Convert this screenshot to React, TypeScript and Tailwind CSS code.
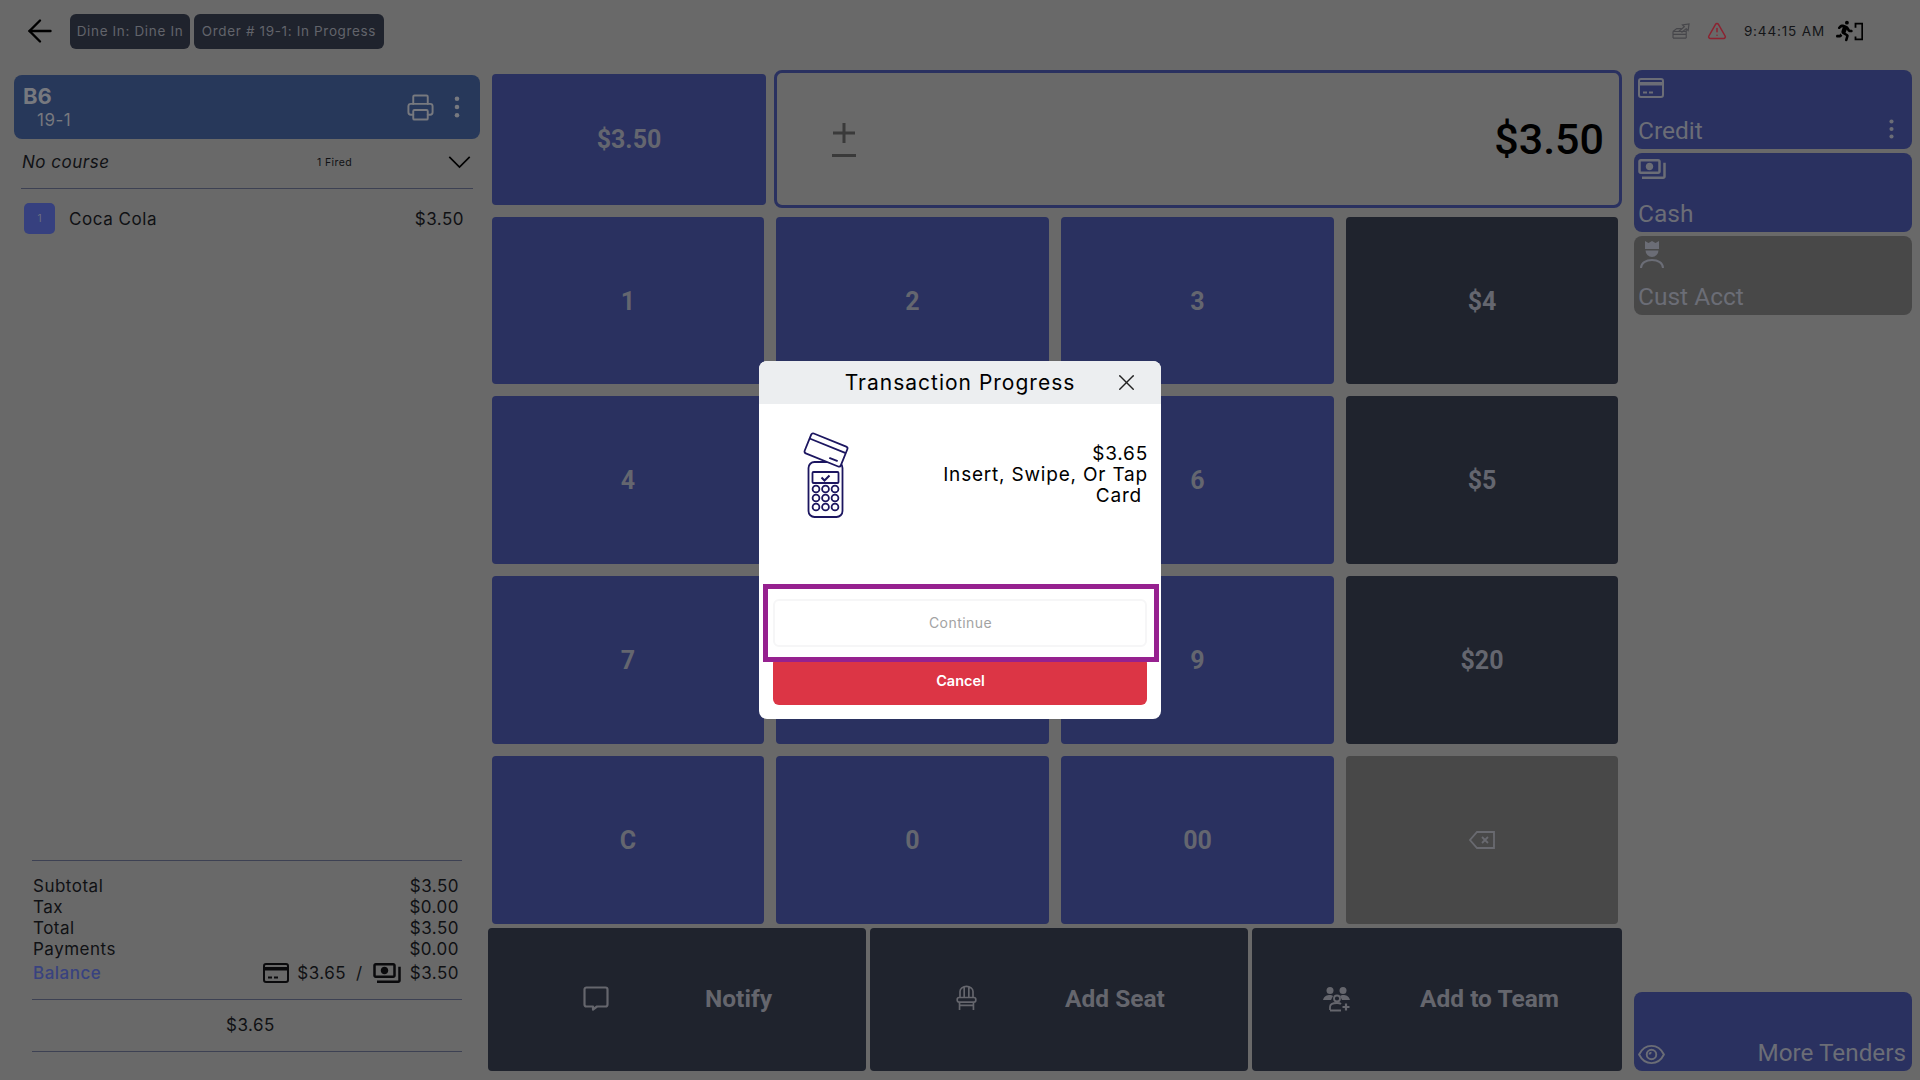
import { ArrowLeft, Printer, X, TriangleAlert } from "lucide-react";
import { MdOutlinePayments } from "react-icons/md";
import { FaPersonRunning } from "react-icons/fa6";

const inter = "font-['Inter','Liberation_Sans',sans-serif]";
const roboto = "font-['Roboto','Liberation_Sans',sans-serif]";

function CardIcon({ className }: { className?: string }) {
  return (
    <svg viewBox="0 0 26 20" className={className} fill="none">
      <rect x="1" y="1" width="24" height="18" rx="2" stroke="currentColor" strokeWidth="2" />
      <rect x="1" y="4" width="24" height="3.500" fill="currentColor" />
      <path d="M5 14.5h4M11 14.5h4" stroke="currentColor" strokeWidth="1.8" />
    </svg>
  );
}

function Dots({ className }: { className?: string }) {
  return (
    <svg viewBox="0 0 6 24" className={className} fill="currentColor">
      <circle cx="3" cy="3" r="2.5" />
      <circle cx="3" cy="12" r="2.5" />
      <circle cx="3" cy="21" r="2.5" />
    </svg>
  );
}

function Terminal() {
  return (
    <svg viewBox="0 0 45 84" className="w-[45px] h-[84px] overflow-visible" fill="none" stroke="#1c1660" strokeWidth="1.8">
      <rect x="5.5" y="28" width="34" height="55" rx="6" />
      <rect x="9.5" y="38" width="26" height="11" rx="1" />
      <path d="M18.5 43.5l3 3 5-5" strokeWidth="2" />
      {[0, 1, 2].map((r) =>
        [0, 1, 2].map((c) => <circle key={`${r}${c}`} cx={13 + c * 9.5} cy={55 + r * 9} r="3.4" />)
      )}
      <g transform="rotate(22 23 16)">
        <rect x="3.500" y="5.300" width="39" height="21.400" rx="2" fill="#fff" />
        <path d="M3.500 11.500h39M29 22h9" />
      </g>
    </svg>
  );
}

function NumKey({ label, bg = "bg-[#2a3160]" }: { label: string; bg?: string }) {
  return (
    <div className={`${bg} rounded-[4px] flex items-center justify-center pt-[2px] text-[#64666f] text-[25px] font-bold ${roboto}`}>
      {label}
    </div>
  );
}

function ActionBtn({ icon, label, w, gap }: { icon: React.ReactNode; label: string; w: string; gap: string }) {
  return (
    <div className={`${w} ${gap} h-[143px] bg-[#1f232d] rounded-[4px] flex items-center text-[#65666d] text-[24.500px] font-bold ${roboto}`}>
      {icon}
      <span>{label}</span>
    </div>
  );
}

function Tender({ icon, label, bg = "bg-[#2a3160]", dots }: { icon: React.ReactNode; label: string; bg?: string; dots?: boolean }) {
  return (
    <div className={`${bg} relative h-[79px] rounded-[8px] flex flex-col justify-between pl-[4px] pb-[2px] text-[#6b6d76] ${roboto}`}>
      <div className="h-[30px] pl-[1px]">{icon}</div>
      <span className="text-[24.500px] leading-[32px]">{label}</span>
      {dots && <Dots className="absolute right-[18px] bottom-[10px] w-[5px] h-[20px]" />}
    </div>
  );
}

function TotalRow({ label, value }: { label: string; value: string }) {
  return (
    <div className="flex justify-between h-[21px] items-center">
      <span>{label}</span>
      <span>{value}</span>
    </div>
  );
}

export default function App() {
  const keys = ["1", "2", "3", "$4", "4", "5", "6", "$5", "7", "8", "9", "$20", "C", "0", "00"];
  return (
    <div className={`relative w-[1920px] h-[1080px] overflow-hidden bg-[#696969] text-[#101114] ${inter}`}>
      <div className="h-[57px] flex items-center">
        <ArrowLeft className="ml-[22px] w-[36px] h-[36px] text-black mt-[5px]" strokeWidth={1.6} />
        <div className="ml-[12px] h-[35px] w-[120px] rounded-[6px] bg-[#1f232d] text-[#62646b] text-[13.500px] tracking-[0.65px] flex items-center justify-center whitespace-nowrap mt-[5px]">Dine In: Dine In</div>
        <div className="ml-[4px] h-[35px] w-[190px] rounded-[6px] bg-[#1f232d] text-[#62646b] text-[13.500px] tracking-[0.65px] flex items-center justify-center whitespace-nowrap mt-[5px]">Order # 19-1: In Progress</div>
        <div className="ml-auto mr-[57px] mt-[5px] flex items-center">
          <svg viewBox="0 0 20 18" className="w-[19px] h-[17px] text-[#46464a]" fill="none" stroke="currentColor" strokeWidth="1.2">
            <path d="M1 9l4-3h5M1 9h14v-2M1 12h14M1 16h14M1 9v7M15 9v7" />
            <path d="M7 9l6-5-2-2 7-1-1 7-2-2-5 4" />
          </svg>
          <TriangleAlert className="ml-[16px] w-[20px] h-[20px] text-[#8c2230]" strokeWidth={1.8} />
          <span className="ml-[17px] text-[13.500px] tracking-[0.85px] text-[#141518]">9:44:15 AM</span>
          <div className="ml-[11px] flex items-center text-black">
            <FaPersonRunning className="w-[18px] h-[24px]" />
            <svg viewBox="0 0 12 24" className="w-[9px] h-[23px]" fill="none" stroke="currentColor" strokeWidth="2.4">
              <path d="M2 7V1.500h9v21H2v-4" />
            </svg>
          </div>
        </div>
      </div>
      <div className="flex h-[1023px]">
        <div className="w-[488px] shrink-0 pl-[14px] pr-[8px] flex flex-col mt-[18px]">
          <div className="h-[64px] rounded-[8px] bg-[#27385a] flex items-center text-[#77797f]">
            <div className="ml-[9px] pt-[2px] flex flex-col">
              <span className="text-[22px] leading-[24px] font-bold">B6</span>
              <span className="ml-[14px] text-[17px] leading-[24px] tracking-[0.5px]">19-1</span>
            </div>
            <Printer className="ml-auto w-[29px] h-[29px]" strokeWidth={1.6} />
            <Dots className="ml-[19px] mr-[20px] w-[6px] h-[22px]" />
          </div>
          <div className="mx-[7px] h-[50px] flex items-center border-b border-[#3d4153] relative">
            <span className="italic text-[17px] tracking-[0.5px] ml-[1px] -mt-[2px]">No course</span>
            <span className="absolute left-[296px] text-[10.5px] tracking-[0.4px] -mt-[2px]">1 Fired</span>
            <svg viewBox="0 0 24 14" className="ml-auto mr-[2px] w-[23px] h-[13px] -mt-[2px]" fill="none" stroke="#000" strokeWidth="1.8"><path d="M1 1l11 11L23 1" /></svg>
          </div>
          <div className="mt-[14px] mx-[10px] flex items-center">
            <div className="w-[31px] h-[31px] rounded-[5px] bg-[#36407f] text-[#6d7080] text-[10px] flex items-center justify-center">1</div>
            <span className="ml-[14px] pt-[2px] text-[17px] tracking-[0.55px]">Coca Cola</span>
            <span className="ml-auto mr-[6px] pt-[2px] text-[17px] tracking-[0.5px]">$3.50</span>
          </div>
          <div className="mt-auto mb-[28px] mx-[18px] text-[17px] tracking-[0.5px] leading-[21px]">
            <div className="border-t border-[#3d4153] pt-[15px] pl-[1px] pr-[3px]">
              <TotalRow label="Subtotal" value="$3.50" />
              <TotalRow label="Tax" value="$0.00" />
              <TotalRow label="Total" value="$3.50" />
              <TotalRow label="Payments" value="$0.00" />
              <div className="flex items-center h-[26px]">
                <span className="text-[#38427f] font-medium">Balance</span>
                <CardIcon className="ml-auto w-[26px] h-[20px] text-[#0a0a0c]" />
                <span className="ml-[8px]">$3.65</span>
                <span className="ml-[10px]">/</span>
                <MdOutlinePayments className="ml-[9px] w-[30px] h-[30px] text-[#0a0a0c]" />
                <span className="ml-[8px]">$3.50</span>
              </div>
            </div>
            <div className="mt-[13px] border-y border-[#3d4153] h-[53px] flex items-center justify-center pl-[7px]">$3.65</div>
          </div>
        </div>

        <div className="w-[1134px] shrink-0 mt-[13px]">
          <div className="h-[138px] flex items-center pl-[4px]">
            <div className={`w-[274px] h-[131px] rounded-[4px] bg-[#2a3160] text-[#64666f] text-[25px] font-bold flex items-center justify-center pt-[2px] ${roboto}`}>$3.50</div>
            <div className="ml-[8px] w-[848px] h-[138px] rounded-[8px] border-[3px] border-[#2a3160] flex items-center pl-[54px] pr-[15px]">
              <svg viewBox="0 0 26 36" className="w-[26px] h-[36px] mt-[2px] text-[#3a3a3a]" fill="none" stroke="currentColor" strokeWidth="3">
                <path d="M13 1v20M2 11h22M1 33.5h24" />
              </svg>
              <span className={`ml-auto pt-[1px] text-[43px] font-medium text-black ${roboto}`}>$3.50</span>
            </div>
          </div>
          <div className="mt-[9px] ml-[4px] w-[1126px] grid grid-cols-[272px_273px_273px_272px] grid-rows-[167px_168px_168px_168px] gap-x-[12px] gap-y-[12px]">
            {keys.map((k) => (
              <NumKey key={k} label={k} bg={k.startsWith("$") ? "bg-[#1f232d]" : "bg-[#2a3160]"} />
            ))}
            <div className="bg-[#484848] rounded-[4px] flex items-center justify-center text-[#696a70]">
              <svg viewBox="0 0 26 18" className="w-[26px] h-[18px]" fill="none" stroke="currentColor" strokeWidth="1.8">
                <path d="M25 1H8L1 9l7 8h17zM13 6l6 6M19 6l-6 6" />
              </svg>
            </div>
          </div>
          <div className="mt-[4px] flex gap-[4px]">
            <ActionBtn w="w-[378px]" gap="pl-[95px] gap-[96px]" label="Notify" icon={
              <svg viewBox="0 0 26 25" className="w-[26px] h-[25px] -mt-[3px]" fill="none" stroke="currentColor" strokeWidth="2.2" strokeLinejoin="round">
                <path d="M3.500 1.500h19a2 2 0 0 1 2 2v15a2 2 0 0 1-2 2H14l-4 3v-3H3.500a2 2 0 0 1-2-2v-15a2 2 0 0 1 2-2z" />
              </svg>
            } />
            <ActionBtn w="w-[378px]" gap="pl-[85px] gap-[87px]" label="Add Seat" icon={
              <svg viewBox="0 0 24 28" className="w-[23px] h-[26px] -mt-[3px]" fill="none" stroke="currentColor" strokeWidth="1.8">
                <path d="M5 13V7a7 5.500 0 0 1 14 0v6M9.500 2.500V13M14.500 2.500V13" />
                <rect x="2" y="13.500" width="20" height="5" rx="2" />
                <path d="M4.500 18.500V27M19.500 18.500V27M4.500 22h15" />
              </svg>
            } />
            <ActionBtn w="w-[370px]" gap="pl-[71px] gap-[69px]" label="Add to Team" icon={
              <svg viewBox="0 0 28 26" className="w-[28px] h-[26px] -mt-[2px]" fill="currentColor">
                <circle cx="7" cy="4.500" r="3.500" /><circle cx="20" cy="4.500" r="3.500" />
                <path d="M0 14c1-4 4-5 7-5 1 0 2 0 3 1l-2 4zM17 10c1-1 2-1 3-1 3 0 6 1 7 5h-8z" />
                <circle cx="14" cy="12.500" r="3" fill="none" stroke="currentColor" strokeWidth="1.8" />
                <path d="M7 24v-3c0-3 3-4 7-4 2 0 3 0 4 1" fill="none" stroke="currentColor" strokeWidth="1.8" />
                <path d="M7 24.500h11M23 17.500v7M19.500 21h7" fill="none" stroke="currentColor" strokeWidth="2.2" />
              </svg>
            } />
          </div>
        </div>

        <div className="ml-[12px] w-[278px] shrink-0 mt-[13px] mb-[9px] flex flex-col gap-[4px]">
          <Tender label="Credit" dots icon={<CardIcon className="w-[26px] h-[20px] mt-[8px] -ml-[1px]" />} />
          <Tender label="Cash" icon={<MdOutlinePayments className="w-[30px] h-[30px] mt-[1px] -ml-[2px]" />} />
          <Tender label="Cust Acct" bg="bg-[#484848]" icon={
            <svg viewBox="0 0 24 30" className="w-[24px] h-[30px] mt-[3px] ml-[1px]" fill="none">
              <path d="M5 2l3.500 2L12 2l3.500 2L19 2v8H5z" fill="currentColor" />
              <path d="M5.500 11.500h13a6.500 6.500 0 0 1-13 0z" fill="currentColor" />
              <path d="M1 29c0-5 5-8 11-8s11 3 11 8" stroke="currentColor" strokeWidth="2" />
            </svg>
          } />
          <div className="mt-auto h-[79px] rounded-[8px] bg-[#2a3160] flex items-end justify-between pl-[4px] pr-[6px] pb-[2px] text-[#6b6d76] text-[24.300px]">
            <svg viewBox="0 0 28 22" className="w-[27px] h-[21px] mb-[4px]" fill="none" stroke="currentColor" strokeWidth="2">
              <path d="M1 11C4 5 9 2 14 2s10 3 13 9c-3 6-8 9-13 9S4 17 1 11z" />
              <circle cx="14" cy="11" r="5" />
              <path d="M14 9a2 2 0 0 0-2 2" />
            </svg>
            <span className={`leading-[32px] ${roboto}`}>More Tenders</span>
          </div>
        </div>
      </div>

      <div className="absolute inset-0 flex items-center justify-center">
        <div className="relative w-[402px] h-[358px] rounded-[8px] bg-white overflow-hidden text-black">
          <div className="h-[43px] bg-[#eceef0] flex items-center justify-center relative">
            <span className="text-[21px] tracking-[1px]">Transaction Progress</span>
            <X className="absolute right-[21px] top-[8px] w-[27px] h-[27px] text-[#222]" strokeWidth={1.3} />
          </div>
          <div className="h-[195px] relative flex">
            <div className="ml-[44px] mt-[30px]"><Terminal /></div>
            <div className="ml-auto mr-[13px] mt-[39px] w-[240px] text-right text-[19px] leading-[21px] tracking-[0.8px]">
              $3.65<br />Insert, Swipe, Or Tap<br /><span className="pr-[6px]">Card</span>
            </div>
          </div>
          <div className="mx-[14px] h-[48px] rounded-[6px] border-2 border-[#f6f6f7] flex items-center justify-center text-[14px] tracking-[0.45px] text-[#a3a3a3] pl-[1px] pb-[1px]">Continue</div>
          <div className="mx-[14px] mt-[10px] h-[48px] rounded-[6px] bg-[#dc3545] flex items-center justify-center text-white text-[14.500px] font-semibold pl-[1px]">Cancel</div>
          <div className="absolute left-[4px] top-[223px] w-[396px] h-[78px] border-[5px] border-[#96218f]" />
        </div>
      </div>
    </div>
  );
}
